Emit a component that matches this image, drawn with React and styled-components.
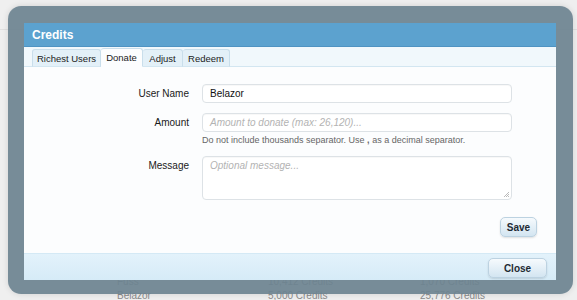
import styled, { createGlobalStyle } from "styled-components";

const GlobalStyle = createGlobalStyle`
  html, body {
    margin: 0;
    padding: 0;
    background: #efefef;
  }
  body {
    font-family: "Liberation Sans", Arial, sans-serif;
    color: #222;
  }
`;

const Page = styled.div`
  position: relative;
  width: 577px;
  height: 300px;
  overflow: hidden;
  background: #efefef;
`;

const Backdrop = styled.div`
  display: flex;
  flex-direction: column;
  padding-top: 29px;
`;

const BackdropRule = styled.div`
  height: 1px;
  background: #e0e0e0;
`;

const BackdropTable = styled.div`
  display: grid;
  grid-template-columns: 151px 152px 1fr;
  row-gap: 3px;
  padding: 246px 0 0 117px;
  font-size: 10px;
  line-height: 11px;
  color: #8a8a8a;
`;

const Overlay = styled.div`
  position: absolute;
  left: 8px;
  top: 6px;
  width: 565px;
  height: 288px;
  box-sizing: border-box;
  padding: 17px 17px 14px 16px;
  border-radius: 13px;
  background: rgba(108, 131, 144, 0.92);
  box-shadow: 0 0 6px rgba(0, 0, 0, 0.12);
`;

const Panel = styled.div`
  display: flex;
  flex-direction: column;
  height: 100%;
  background: #fcfdfe;
`;

const TitleBar = styled.div`
  height: 23px;
  display: flex;
  align-items: center;
  padding-left: 8px;
  background: #5ca2cf;
  border-bottom: 1px solid #4f93c2;
  color: #fff;
  font-size: 12px;
  font-weight: bold;
`;

const TabBar = styled.div`
  height: 19px;
  display: flex;
  align-items: flex-end;
  padding-left: 8px;
  background: #f1f8fc;
  border-bottom: 1px solid #d3e6f1;
`;

const Tab = styled.div`
  width: ${(p) => p.$w}px;
  height: ${(p) => (p.$active ? 19 : 18)}px;
  box-sizing: border-box;
  display: flex;
  align-items: center;
  justify-content: center;
  margin-bottom: -1px;
  border: 1px solid #c9deeb;
  border-left-width: ${(p) => (p.$first ? 1 : 0)}px;
  border-bottom: ${(p) => (p.$active ? "1px solid #fcfdfe" : "1px solid #d3e6f1")};
  border-radius: 3px 3px 0 0;
  background: ${(p) => (p.$active ? "#fcfdfe" : "#e3f0f8")};
  font-size: 9.5px;
  color: #222;
`;

const Content = styled.div`
  flex: 1;
  display: flex;
  flex-direction: column;
  padding: 17px 19px 0 0;
`;

const Form = styled.div`
  display: grid;
  grid-template-columns: 165px 310px;
  column-gap: 13px;
  row-gap: 10px;
  align-items: start;
`;

const Label = styled.div`
  text-align: right;
  font-size: 10px;
  color: #1a1a1a;
  line-height: 19px;
`;

const Field = styled.div`
  display: flex;
  flex-direction: column;
`;

const TextInput = styled.div`
  height: 19px;
  box-sizing: border-box;
  display: flex;
  align-items: center;
  padding: 0 7px;
  border: 1px solid #dde2e6;
  border-radius: 4px;
  background: #fff;
  box-shadow: inset 0 1px 1px rgba(0, 0, 0, 0.03);
  font-size: 10px;
  color: ${(p) => (p.$placeholder ? "#b3b3b3" : "#111")};
  font-style: ${(p) => (p.$placeholder ? "italic" : "normal")};
`;

const TextArea = styled(TextInput)`
  position: relative;
  height: 44px;
  align-items: flex-start;
  padding-top: 3px;
`;

const Grip = styled.svg`
  position: absolute;
  right: 1px;
  bottom: 1px;
`;

const Hint = styled.div`
  margin-top: 3px;
  font-size: 9px;
  color: #666;
  line-height: 11px;
  white-space: nowrap;
`;

const Actions = styled.div`
  display: flex;
  justify-content: flex-end;
  margin-top: 17px;
`;

const Button = styled.div`
  width: ${(p) => p.$w}px;
  height: 20px;
  box-sizing: border-box;
  display: flex;
  align-items: center;
  justify-content: center;
  border: 1px solid #bcd2e1;
  border-radius: 5px;
  background: linear-gradient(#f6fafd, #d3e5f1);
  box-shadow: 0 1px 2px rgba(0, 0, 0, 0.12);
  font-size: 10px;
  font-weight: bold;
  color: #1f2a33;
`;

const Footer = styled.div`
  height: 27px;
  box-sizing: border-box;
  display: flex;
  justify-content: flex-end;
  align-items: flex-start;
  padding: 4px 9px 0 0;
  border-top: 1px solid #d4e9f5;
  background: linear-gradient(#e3f2fb, #d6ebf7);
`;

const tabs = [
  { label: "Richest Users", w: 69 },
  { label: "Donate", w: 42, active: true },
  { label: "Adjust", w: 40 },
  { label: "Redeem", w: 47 },
];

export default function App() {
  return (
    <>
      <GlobalStyle />
      <Page>
        <Backdrop>
          <BackdropRule />
          <BackdropTable>
            <span>Fuss</span>
            <span>10,412 Credits</span>
            <span>1,070 Credits</span>
            <span>Belazor</span>
            <span>5,000 Credits</span>
            <span>25,776 Credits</span>
          </BackdropTable>
        </Backdrop>
        <Overlay>
          <Panel>
            <TitleBar>Credits</TitleBar>
            <TabBar>
              {tabs.map((t, i) => (
                <Tab key={t.label} $w={t.w} $active={t.active} $first={i === 0}>
                  {t.label}
                </Tab>
              ))}
            </TabBar>
            <Content>
              <Form>
                <Label>User Name</Label>
                <TextInput>Belazor</TextInput>
                <Label>Amount</Label>
                <Field>
                  <TextInput $placeholder>Amount to donate (max: 26,120)...</TextInput>
                  <Hint>
                    Do not include thousands separator. Use <b>,</b> as a decimal separator.
                  </Hint>
                </Field>
                <Label>Message</Label>
                <TextArea $placeholder>
                  Optional message...
                  <Grip width="7" height="7" viewBox="0 0 7 7">
                    <path d="M6 1 L1 6 M6 3 L3 6 M6 5 L5 6" stroke="#aaa" strokeWidth="0.8" />
                  </Grip>
                </TextArea>
              </Form>
              <Actions>
                <Button $w={37}>Save</Button>
              </Actions>
            </Content>
            <Footer>
              <Button $w={59}>Close</Button>
            </Footer>
          </Panel>
        </Overlay>
      </Page>
    </>
  );
}
